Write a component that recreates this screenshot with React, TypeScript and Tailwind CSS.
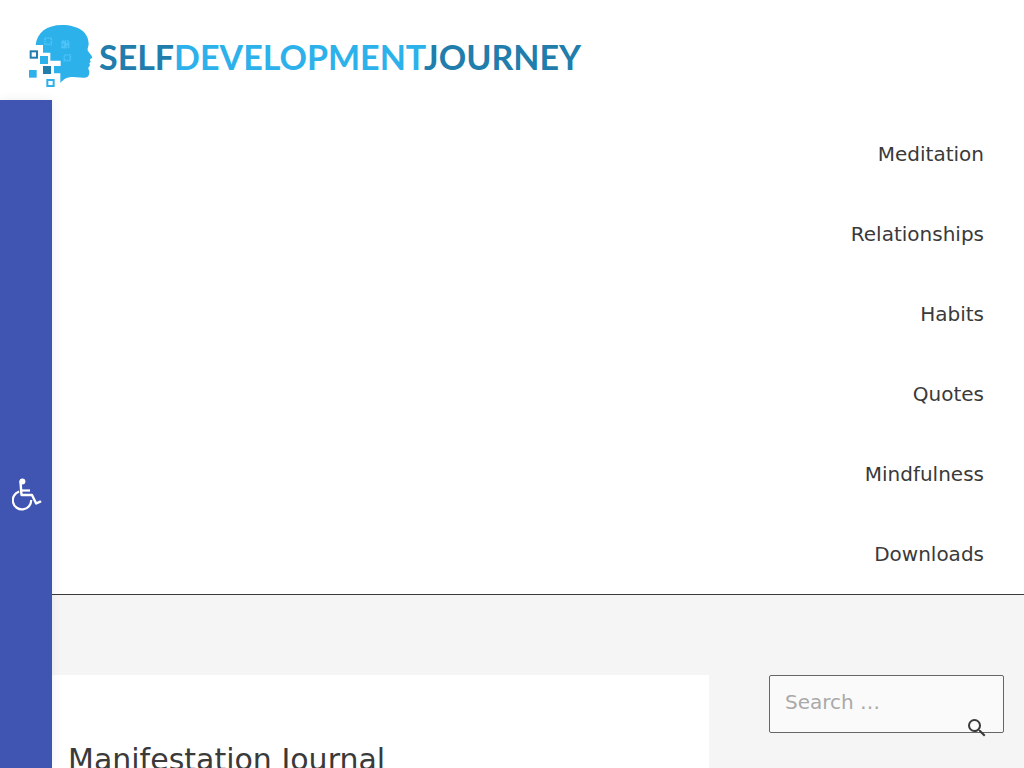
import { MdSearch } from 'react-icons/md'

const navItems = ['Meditation', 'Relationships', 'Habits', 'Quotes', 'Mindfulness', 'Downloads']

function HeadMark() {
  return (
    <svg viewBox="27 27 192 192" className="w-16 h-16 shrink-0" aria-hidden="true">
      <path
        fill="#2db1eb"
        d="M47 90C51 53 80 30 126 30c50 0 81 23 80 58-1 8-4 12-3 18 2 6 14 17 14 21 0 3-7 4-7 7l2 7-4 4 2 5c0 4-5 5-5 9 0 5 4 8 3 14-1 12-7 15-18 15l-31-2c-19 0-27 6-38 18V175h-19v-22h20v-16H91v-24H69V90z"
      />
      <g fill="none" stroke="#4bc3f7" strokeWidth="5" strokeDasharray="5 2">
        <rect x="75" y="69" width="19" height="19" />
        <rect x="127" y="78" width="19" height="19" />
        <rect x="133" y="120" width="18" height="17" />
      </g>
      <path fill="#4bc3f7" d="M124 78h14v6h10v8h-10v8h-14v-8h8v-6h-8z" />
      <g fill="#2db1eb">
        <rect x="60" y="123" width="24" height="24" />
        <rect x="27" y="165" width="23" height="23" />
      </g>
      <rect x="69" y="153" width="24" height="24" fill="#217dab" />
      <rect x="32" y="109" width="19" height="19" fill="#fff" stroke="#217dab" strokeWidth="6" />
      <rect x="82" y="195" width="19" height="18" fill="#fff" stroke="#2db1eb" strokeWidth="6" />
    </svg>
  )
}

function WheelchairIcon() {
  return (
    <svg viewBox="0 0 30 33" className="w-[30px] h-[33px]" fill="none" stroke="#fff" aria-hidden="true">
      <circle cx="10.4" cy="3.6" r="3" fill="#fff" stroke="none" />
      <path d="M8.500 4l1 13h10.500l4.200 8.500 4-1.800" strokeWidth="2.400" strokeLinecap="round" strokeLinejoin="round" />
      <path d="M10 12.500h8" strokeWidth="2.200" />
      <path d="M7.200 13.500A9.200 9.200 0 1 0 19.200 22" strokeWidth="2.200" />
    </svg>
  )
}

export default function App() {
  return (
    <div className="min-h-screen bg-[#f5f5f5] text-[#3a3a3a] text-xl font-['DejaVu_Sans',sans-serif]">
      {/* Accessibility toolbar */}
      <aside className="fixed left-0 top-[100px] bottom-0 z-10 w-[52px] bg-[#4054b2] shadow-[0_0_10px_rgba(0,0,0,0.07)] flex items-center justify-center">
        <button type="button" aria-label="Open accessibility toolbar" className="pt-[120px] pl-0.5">
          <WheelchairIcon />
        </button>
      </aside>

      {/* Header */}
      <header className="bg-white border-b border-[#3a3a3a]">
        <a href="#" className="flex items-center gap-1.5 h-28 mb-0.5 pl-[29px]">
          <HeadMark />
          <span className="pt-0.5 font-['Lato',sans-serif] text-[34px] font-bold leading-none text-[#217dab]">
            SELF<span className="text-[#2db1eb]">DEVELOPMENT</span>JOURNEY
          </span>
        </a>
        <nav className="flex flex-col items-end pr-10">
          {navItems.map((item) => (
            <a key={item} href="#" className="leading-[80px]">
              {item}
            </a>
          ))}
        </nav>
      </header>

      {/* Content */}
      <div className="flex items-start gap-[60px] px-5 pt-20">
        <main className="flex-1 bg-white px-12 py-16">
          <h1 className="text-3xl leading-[42px]">Manifestation Journal</h1>
        </main>

        <form role="search" className="relative w-[235px]" onSubmit={(e) => e.preventDefault()}>
          <input
            type="search"
            aria-label="Search"
            placeholder="Search …"
            className="block w-full h-[58px] px-[15px] pb-1 rounded-xs border border-[#666] bg-[#fafafa] placeholder:text-[#a9a9a9] outline-none"
          />
          <button type="submit" aria-label="Submit search" className="absolute right-[15px] top-[41px]">
            <MdSearch className="w-6 h-6" />
          </button>
        </form>
      </div>
    </div>
  )
}
